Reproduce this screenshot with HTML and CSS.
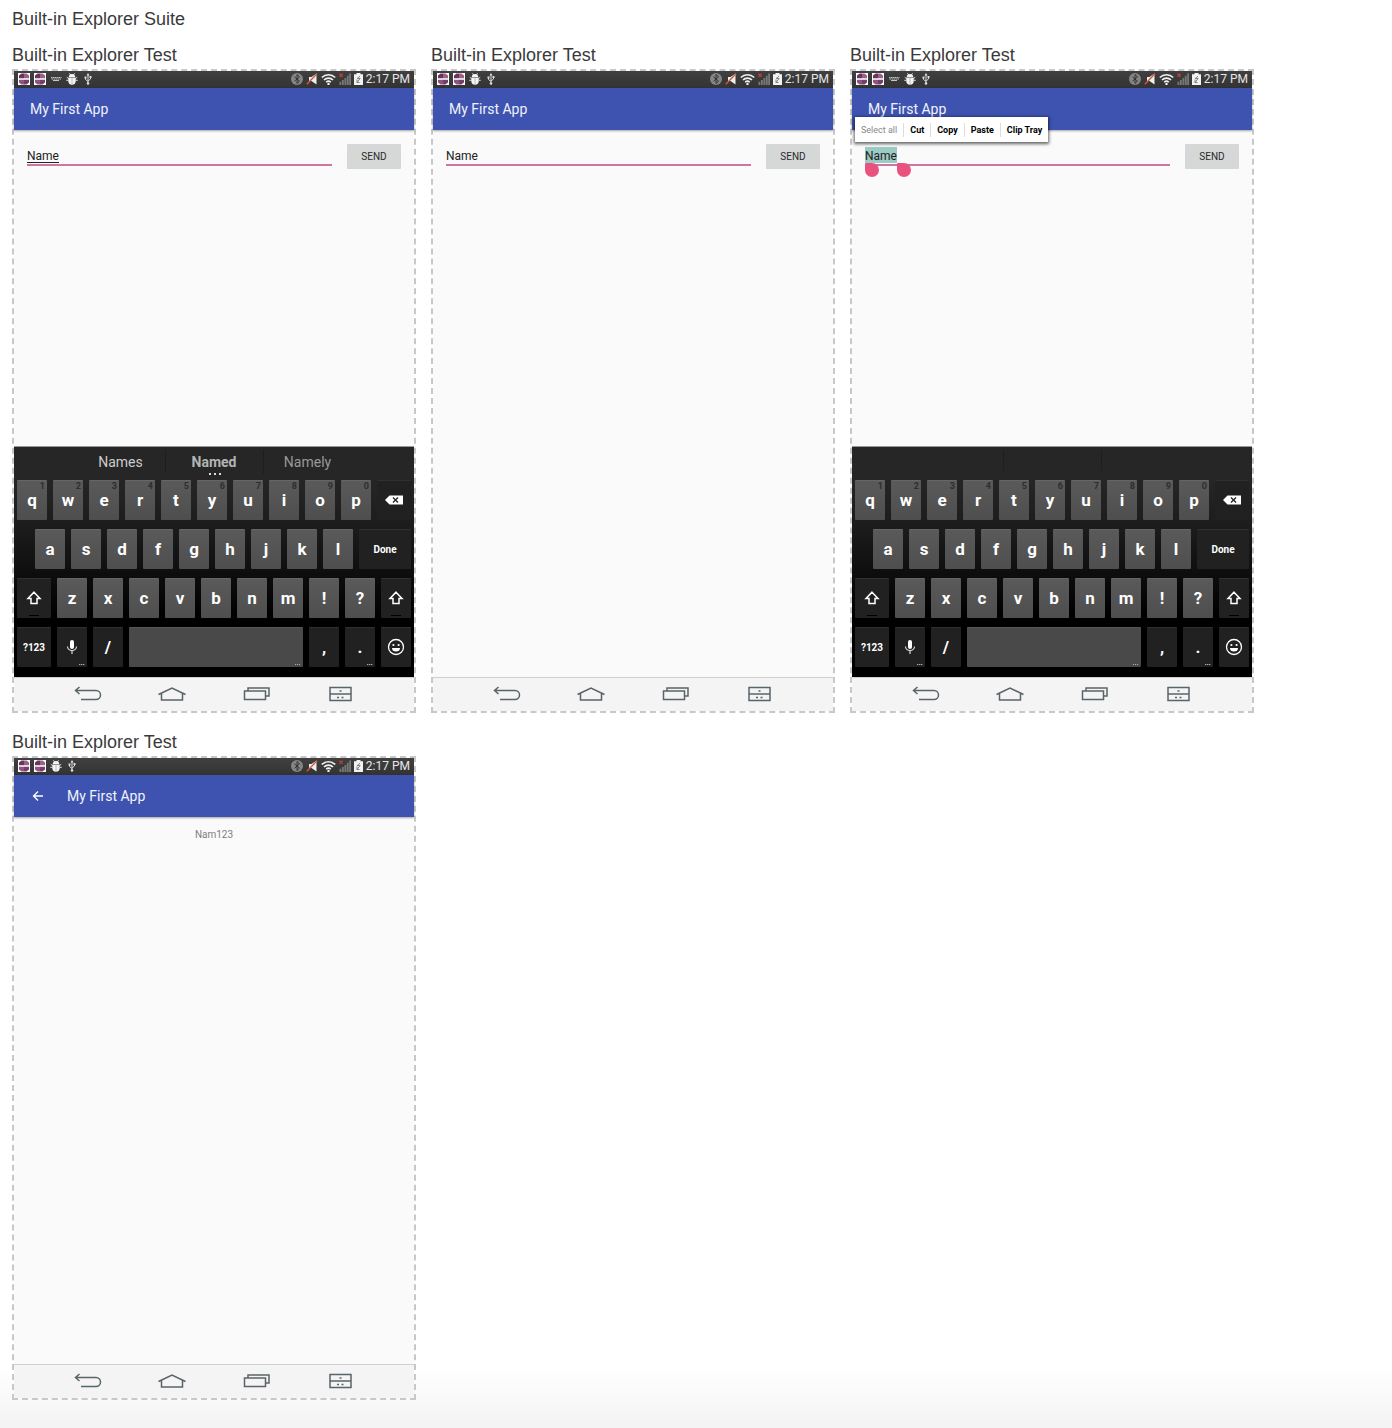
FILE: index.html
```html
<!DOCTYPE html>
<html lang="en">
<head>
<meta charset="utf-8">
<meta name="viewport" content="width=device-width, initial-scale=1">
<title>Built-in Explorer Suite</title>
<link rel="stylesheet" href="styles.css">
</head>
<body>
<svg class="sprite" aria-hidden="true">
  <symbol id="i-pkg" viewBox="0 0 12 12"><path fill="#fff" d="M0 0h12v12H0z"/><path fill="#6a3360" d="M3.500.5H6v4.700H1V2.500z"/><path fill="#9c6189" d="M8.500.5H6v4.700h5V2.500z"/><path fill="#8f5580" d="M1 6.800h5v4.700H3.500L1 9.500z"/><path fill="#73406a" d="M11 6.800H6v4.700h2.500L11 9.500z"/></symbol>
  <symbol id="i-kbd" viewBox="0 0 12 12"><path fill="none" stroke="#c8c8c8" stroke-dasharray="1.500 .5" d="M1 4.500h10.500M1.500 6h9.500"/><path stroke="#c8c8c8" d="M3 7.500h6"/></symbol>
  <symbol id="i-bug" viewBox="0 0 12 12"><path fill="#f4f4f4" d="M2.800 4a3.200 2.900 0 0 1 6.400 0zM2.300 4.600h7.400v3.400a3.700 3.700 0 0 1-7.400 0z"/><path fill="none" stroke="#f4f4f4" stroke-width=".9" d="M3.500.3l1 1.500M8.500.3l-1 1.500M2.500 5.500L.8 4.300M9.500 5.500l1.700-1.200M2.500 7.300H.3M9.500 7.300h2.200"/><path stroke="#999" stroke-width=".6" d="M6 4.600v7"/></symbol>
  <symbol id="i-usb" viewBox="0 0 12 12"><path fill="none" stroke="#ddd" d="M6 1.500v9M3.500 4.500v2L6 8.500M8.500 3.500v2.500L6 8"/><path fill="#ddd" d="M6 0l1.500 2.500h-3zM2.500 3.500h2v2h-2zM7.500 3h2v2h-2z"/><circle cx="6" cy="10.500" r="1.300" fill="#ddd"/></symbol>
  <symbol id="i-bt" viewBox="0 0 12 12"><circle cx="6" cy="6" r="6" fill="#858585"/><path fill="none" stroke="#333" d="M3.500 3.800l5 4.400L6 10.500v-9l2.500 2.300-5 4.400"/></symbol>
  <symbol id="i-mute" viewBox="0 0 12 12"><path fill="#eee" d="M3 4h2.500L10.500.5v11L5.500 8H3z"/><path stroke="#d05a3c" stroke-width="1.300" d="M.8 11.300L11 .8"/></symbol>
  <symbol id="i-wifi" viewBox="0 0 15 12"><path fill="none" stroke="#f2f2f2" stroke-width="1.600" d="M.8 4.500a9.500 9.500 0 0 1 13.400 0M3 7a6.300 6.300 0 0 1 9 0M5.200 9.200a3.300 3.300 0 0 1 4.600 0"/><circle cx="7.500" cy="11" r="1.200" fill="#f2f2f2"/></symbol>
  <symbol id="i-signal" viewBox="0 0 13 13"><path fill="#777" d="M.5 9.500h2V13h-2zM3.200 7.500h2V13h-2zM5.900 5.500h2V13h-2zM8.500 3h2v10h-2zM11 .5h2V13h-2z"/><path stroke="#c8452c" stroke-width="1.200" d="M.5.8l3.500 3.500M4 .8L.5 4.300"/></symbol>
  <symbol id="i-batt" viewBox="0 0 9 12"><path fill="#f2f2f2" d="M2.500 0h4v1.200H9V12H0V1.200h2.500z"/><path fill="none" stroke="#777" stroke-width=".9" d="M6 3.200L3.200 5.500h3L3 9.500M3 6.500v3h2.500"/></symbol>
  <symbol id="i-back" viewBox="0 0 28 16"><path d="M5.500 1L1.500 4.500 5.500 8M1.500 4.500H22a4.500 4.500 0 0 1 0 9H7"/></symbol>
  <symbol id="i-home" viewBox="0 0 28 16"><path d="M.5 8.500L14 2l13.500 6.500M3.500 7.500v6.500h21V7.500"/></symbol>
  <symbol id="i-recent" viewBox="0 0 28 16"><path d="M2.500 5h21v8.500h-21zM6 5V2h21v8h-3.500"/></symbol>
  <symbol id="i-panel" viewBox="0 0 28 16"><path d="M4 1.500h21v13H4zM4 8h21M13.500 5h2M11 11.500h2M15.500 11.500h2"/></symbol>
  <symbol id="i-del" viewBox="0 0 18 10"><path fill="#fff" d="M4.500.5H18v9H4.500L0 5z"/><path stroke="#222" stroke-width="1.300" d="M8 2.500l5 5M13 2.500l-5 5"/></symbol>
  <symbol id="i-shift" viewBox="0 0 16 14"><path fill="none" stroke="#fff" stroke-width="1.500" d="M8 1.200L14 7.500h-3V12.500H5V7.500H2z"/></symbol>
  <symbol id="i-mic" viewBox="0 0 12 16"><rect x="4" y="1" width="4" height="9" rx="2" fill="#fff"/><path fill="none" stroke="#ddd" stroke-width="1.200" d="M1.500 7.500a4.500 4 0 0 0 9 0M6 11.500V15"/></symbol>
  <symbol id="i-smile" viewBox="0 0 18 18"><circle cx="9" cy="9" r="7.500" fill="none" stroke="#fff" stroke-width="1.300"/><circle cx="6.400" cy="7" r="1.100" fill="#fff"/><circle cx="11.600" cy="7" r="1.100" fill="#fff"/><path fill="#fff" d="M5 10h8a4 3.500 0 0 1-8 0z"/></symbol>
  <symbol id="i-up" viewBox="0 0 12 12"><path fill="none" stroke="#fff" stroke-width="1.300" d="M11 6H1.500M6 1.500L1.500 6 6 10.500"/></symbol>
</svg>

<h1 class="title">Built-in Explorer Suite</h1>
<main class="tests">

  <article class="test">
    <h2 class="title">Built-in Explorer Test</h2>
    <div class="screen">
      <div class="status">
        <svg class="si"><use href="#i-pkg"/></svg><svg class="si"><use href="#i-pkg"/></svg><svg class="si"><use href="#i-kbd"/></svg><svg class="si"><use href="#i-bug"/></svg><svg class="si"><use href="#i-usb"/></svg>
        <span class="system"><svg class="si"><use href="#i-bt"/></svg><svg class="si"><use href="#i-mute"/></svg><svg class="si wide"><use href="#i-wifi"/></svg><svg class="si"><use href="#i-signal"/></svg><svg class="si slim"><use href="#i-batt"/></svg><time>2:17 PM</time></span>
      </div>
      <header class="appbar">My First App</header>
      <form class="form"><input class="field underlined" type="text" value="Name" aria-label="Message" spellcheck="false"><button class="send" type="button">SEND</button></form>
      <div class="keyboard">
        <div class="suggest"><span>Names</span><span class="best">Named</span><span class="dim">Namely</span></div>
        <div class="row"><button class="key">q<sup>1</sup></button><button class="key">w<sup>2</sup></button><button class="key">e<sup>3</sup></button><button class="key">r<sup>4</sup></button><button class="key">t<sup>5</sup></button><button class="key">y<sup>6</sup></button><button class="key">u<sup>7</sup></button><button class="key">i<sup>8</sup></button><button class="key">o<sup>9</sup></button><button class="key">p<sup>0</sup></button><button class="key dark grow" aria-label="Delete"><svg class="i-del"><use href="#i-del"/></svg></button></div>
        <div class="row indent"><button class="key">a</button><button class="key">s</button><button class="key">d</button><button class="key">f</button><button class="key">g</button><button class="key">h</button><button class="key">j</button><button class="key">k</button><button class="key">l</button><button class="key dark grow small">Done</button></div>
        <div class="row"><button class="key dark grow lock" aria-label="Shift"><svg class="i-shift"><use href="#i-shift"/></svg></button><button class="key">z</button><button class="key">x</button><button class="key">c</button><button class="key">v</button><button class="key">b</button><button class="key">n</button><button class="key">m</button><button class="key">!</button><button class="key">?</button><button class="key dark lock" aria-label="Shift"><svg class="i-shift"><use href="#i-shift"/></svg></button></div>
        <div class="row"><button class="key dark mode small">?123</button><button class="key dark more" aria-label="Voice input"><svg class="i-mic"><use href="#i-mic"/></svg></button><button class="key dark">/</button><button class="key space grow more" aria-label="Space"></button><button class="key dark">,</button><button class="key dark more">.</button><button class="key dark" aria-label="Emoji"><svg class="i-smile"><use href="#i-smile"/></svg></button></div>
      </div>
      <nav class="nav"><svg><use href="#i-back"/></svg><svg><use href="#i-home"/></svg><svg><use href="#i-recent"/></svg><svg><use href="#i-panel"/></svg></nav>
    </div>
  </article>

  <article class="test">
    <h2 class="title">Built-in Explorer Test</h2>
    <div class="screen">
      <div class="status">
        <svg class="si"><use href="#i-pkg"/></svg><svg class="si"><use href="#i-pkg"/></svg><svg class="si"><use href="#i-bug"/></svg><svg class="si"><use href="#i-usb"/></svg>
        <span class="system"><svg class="si"><use href="#i-bt"/></svg><svg class="si"><use href="#i-mute"/></svg><svg class="si wide"><use href="#i-wifi"/></svg><svg class="si"><use href="#i-signal"/></svg><svg class="si slim"><use href="#i-batt"/></svg><time>2:17 PM</time></span>
      </div>
      <header class="appbar">My First App</header>
      <form class="form"><input class="field" type="text" value="Name" aria-label="Message" spellcheck="false"><button class="send" type="button">SEND</button></form>
      <nav class="nav"><svg><use href="#i-back"/></svg><svg><use href="#i-home"/></svg><svg><use href="#i-recent"/></svg><svg><use href="#i-panel"/></svg></nav>
    </div>
  </article>

  <article class="test">
    <h2 class="title">Built-in Explorer Test</h2>
    <div class="screen">
      <div class="status">
        <svg class="si"><use href="#i-pkg"/></svg><svg class="si"><use href="#i-pkg"/></svg><svg class="si"><use href="#i-kbd"/></svg><svg class="si"><use href="#i-bug"/></svg><svg class="si"><use href="#i-usb"/></svg>
        <span class="system"><svg class="si"><use href="#i-bt"/></svg><svg class="si"><use href="#i-mute"/></svg><svg class="si wide"><use href="#i-wifi"/></svg><svg class="si"><use href="#i-signal"/></svg><svg class="si slim"><use href="#i-batt"/></svg><time>2:17 PM</time></span>
      </div>
      <header class="appbar">My First App</header>
      <form class="form"><input class="field selected" type="text" value="Name" aria-label="Message" spellcheck="false"><button class="send" type="button">SEND</button>
        <span class="handle start"></span><span class="handle end"></span>
        <div class="popup"><button type="button" disabled>Select all</button><button type="button">Cut</button><button type="button">Copy</button><button type="button">Paste</button><button type="button">Clip Tray</button></div>
      </form>
      <div class="keyboard">
        <div class="suggest"><span></span><span class="best empty"></span><span></span></div>
        <div class="row"><button class="key">q<sup>1</sup></button><button class="key">w<sup>2</sup></button><button class="key">e<sup>3</sup></button><button class="key">r<sup>4</sup></button><button class="key">t<sup>5</sup></button><button class="key">y<sup>6</sup></button><button class="key">u<sup>7</sup></button><button class="key">i<sup>8</sup></button><button class="key">o<sup>9</sup></button><button class="key">p<sup>0</sup></button><button class="key dark grow" aria-label="Delete"><svg class="i-del"><use href="#i-del"/></svg></button></div>
        <div class="row indent"><button class="key">a</button><button class="key">s</button><button class="key">d</button><button class="key">f</button><button class="key">g</button><button class="key">h</button><button class="key">j</button><button class="key">k</button><button class="key">l</button><button class="key dark grow small">Done</button></div>
        <div class="row"><button class="key dark grow lock" aria-label="Shift"><svg class="i-shift"><use href="#i-shift"/></svg></button><button class="key">z</button><button class="key">x</button><button class="key">c</button><button class="key">v</button><button class="key">b</button><button class="key">n</button><button class="key">m</button><button class="key">!</button><button class="key">?</button><button class="key dark lock" aria-label="Shift"><svg class="i-shift"><use href="#i-shift"/></svg></button></div>
        <div class="row"><button class="key dark mode small">?123</button><button class="key dark more" aria-label="Voice input"><svg class="i-mic"><use href="#i-mic"/></svg></button><button class="key dark">/</button><button class="key space grow more" aria-label="Space"></button><button class="key dark">,</button><button class="key dark more">.</button><button class="key dark" aria-label="Emoji"><svg class="i-smile"><use href="#i-smile"/></svg></button></div>
      </div>
      <nav class="nav"><svg><use href="#i-back"/></svg><svg><use href="#i-home"/></svg><svg><use href="#i-recent"/></svg><svg><use href="#i-panel"/></svg></nav>
    </div>
  </article>

  <article class="test">
    <h2 class="title">Built-in Explorer Test</h2>
    <div class="screen">
      <div class="status">
        <svg class="si"><use href="#i-pkg"/></svg><svg class="si"><use href="#i-pkg"/></svg><svg class="si"><use href="#i-bug"/></svg><svg class="si"><use href="#i-usb"/></svg>
        <span class="system"><svg class="si"><use href="#i-bt"/></svg><svg class="si"><use href="#i-mute"/></svg><svg class="si wide"><use href="#i-wifi"/></svg><svg class="si"><use href="#i-signal"/></svg><svg class="si slim"><use href="#i-batt"/></svg><time>2:17 PM</time></span>
      </div>
      <header class="appbar"><svg class="i-up"><use href="#i-up"/></svg>My First App</header>
      <p class="message">Nam123</p>
      <nav class="nav"><svg><use href="#i-back"/></svg><svg><use href="#i-home"/></svg><svg><use href="#i-recent"/></svg><svg><use href="#i-panel"/></svg></nav>
    </div>
  </article>
</main>
</body>
</html>
```
FILE: styles.css
```css
* {
  box-sizing: border-box;
}

body {
  margin: 0;
  min-height: 100vh;
  padding: 9px 12px 28px;
  background: linear-gradient(to top, #f3f3f3, #fff 60px) no-repeat #fff;
  font-family: Roboto, sans-serif;
}

.sprite {
  display: none;
}

button,
input {
  margin: 0;
  border: 0;
  padding: 0;
  font-family: inherit;
}

.title {
  margin: 0;
  font: 400 18px/20px "Liberation Sans", Arial, sans-serif;
  color: #3a3a3a;
}

.tests {
  display: flex;
  flex-wrap: wrap;
  gap: 19px 15px;
  margin-top: 16px;
}

.test {
  width: 404px;
}

.test .title {
  margin-bottom: 4px;
}

.screen {
  display: flex;
  flex-direction: column;
  min-height: 644px;
  border: 2px dashed #c8c8c8;
  background: #fafafa;
  background-clip: padding-box;
}

/* Status bar */
.status {
  display: flex;
  align-items: center;
  gap: 4px;
  height: 17px;
  padding: 0 4px 1px;
  background: linear-gradient(#404040, #333);
}

.si {
  width: 12px;
  height: 12px;
}

.si.wide {
  width: 15px;
}

.si.slim {
  width: 9px;
}

.system {
  display: flex;
  align-items: center;
  gap: 3px;
  margin-left: auto;
  color: #e6e6e6;
  font-size: 12px;
  line-height: 16px;
}

/* App bar */
.appbar {
  display: flex;
  align-items: center;
  height: 42px;
  padding-left: 16px;
  background: #3e53b0;
  box-shadow: 0 1px 2px rgba(0, 0, 0, .35);
  color: #f0f2fa;
  font-size: 14px;
}

.i-up {
  width: 12px;
  height: 12px;
  margin: 0 23px 0 2px;
}

/* Message form */
.form {
  position: relative;
  display: flex;
  align-items: flex-start;
  gap: 15px;
  padding: 14px 13px 0;
}

.field {
  flex: 1;
  min-width: 0;
  height: 22px;
  padding-top: 3px;
  border-bottom: 2px solid #cc76a0;
  background: none;
  color: #222;
  font-size: 12px;
}

.underlined {
  text-decoration: underline;
  text-underline-offset: 2px;
}

.selected {
  background: linear-gradient(#9ccbc5, #9ccbc5) 0 3px / 32px 16px no-repeat;
}

.send {
  width: 54px;
  height: 25px;
  border-radius: 1px;
  background: #d6d7d7;
  color: #2a2a2a;
  font-size: 10px;
}

.handle {
  position: absolute;
  top: 33px;
  left: 13px;
  width: 14px;
  height: 14px;
  border-radius: 1px 7px 7px 7px;
  background: #e9527f;
}

.handle.end {
  left: 45px;
}

.popup {
  position: absolute;
  top: -13px;
  left: 3px;
  display: flex;
  align-items: center;
  height: 25px;
  background: #fff;
  box-shadow: 0 1px 3px 1px rgba(0, 0, 0, .6);
}

.popup button {
  height: 14px;
  padding: 0 6px;
  border-right: 1px solid #ddd;
  background: none;
  color: #000;
  font-size: 9px;
  font-weight: 700;
  white-space: nowrap;
}

.popup button:disabled {
  color: #888;
  font-weight: 400;
}

.popup button:last-child {
  border-right: 0;
}

.message {
  margin: 12px 0 0;
  color: #808080;
  font-size: 10px;
  line-height: 12px;
  text-align: center;
}

/* Keyboard */
.keyboard {
  display: flex;
  flex-direction: column;
  gap: 9px;
  margin-top: auto;
  padding: 0 3px 10px;
  border-top: 1px solid #999;
  background: linear-gradient(#262626 30px, #1c1c1c 80px, #000 170px);
}

.keyboard + .nav {
  margin-top: 0;
}

.suggest {
  display: grid;
  grid-template-columns: 88px 99px 88px;
  justify-content: center;
  height: 24px;
  padding-top: 3px;
  color: #ccc;
  font-size: 14px;
  line-height: 24px;
  text-align: center;
}

.suggest .best {
  position: relative;
  border: solid #1e1e1e;
  border-width: 0 1px;
  color: #b4b4b4;
  font-weight: 700;
}

.suggest .best::after {
  content: "";
  position: absolute;
  left: 43px;
  bottom: -1px;
  width: 12px;
  height: 2px;
  background: repeating-linear-gradient(90deg, #ddd 0 2px, transparent 2px 5px);
}

.suggest .empty::after {
  display: none;
}

.suggest .dim {
  color: #999;
}

.row {
  display: flex;
  gap: 6px;
}

.row.indent {
  padding-left: 18px;
}

.key {
  position: relative;
  display: flex;
  align-items: center;
  justify-content: center;
  width: 30px;
  height: 40px;
  padding-bottom: 1px;
  border-top: 1px solid #666;
  border-radius: 1px;
  background: linear-gradient(#5a5a5a, #4e4e4e);
  color: #fff;
  font-size: 17px;
  font-weight: 700;
}

.key.dark {
  border-top-color: #303030;
  background: #212121;
}

.key.space {
  border-top-color: #555;
  background: #494949;
}

.key.grow {
  flex: 1;
}

.key.mode {
  width: 34px;
}

.key.small {
  font-size: 10px;
}

.key sup {
  position: absolute;
  top: 0;
  right: 2px;
  color: #2e2e2e;
  font-size: 9px;
  line-height: 10px;
}

.key.more::after {
  content: "";
  position: absolute;
  right: 2px;
  bottom: 2px;
  width: 6px;
  height: 1px;
  background: repeating-linear-gradient(90deg, #aaa 0 1px, #555 1px 2px);
}

.key.lock::after {
  content: "";
  position: absolute;
  bottom: 2px;
  width: 10px;
  height: 1px;
  background: #000;
}

.i-del {
  width: 18px;
  height: 10px;
}

.i-shift {
  width: 16px;
  height: 14px;
}

.i-mic {
  width: 12px;
  height: 16px;
}

.i-smile {
  width: 18px;
  height: 18px;
}

/* Navigation bar */
.nav {
  display: grid;
  grid-template-columns: repeat(4, 1fr);
  align-items: center;
  justify-items: center;
  height: 34px;
  margin-top: auto;
  padding: 0 32px 1px;
  border-top: 1px solid #d0d0d0;
  background: #f4f4f4;
}

.nav svg {
  width: 28px;
  height: 16px;
  fill: none;
  stroke: #59646a;
  stroke-width: 1.5px;
}
```
